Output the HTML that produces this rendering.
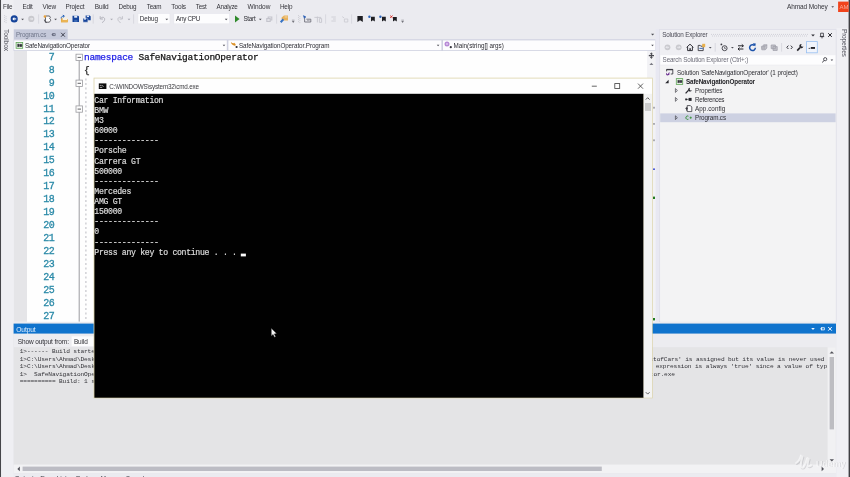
<!DOCTYPE html>
<html lang="en"><head><meta charset="utf-8"><title>SafeNavigationOperator - Microsoft Visual Studio</title>
<style>
*{box-sizing:border-box;margin:0;padding:0}
html,body{width:850px;height:477px;overflow:hidden;background:#ebebf0}
body{font-family:"Liberation Sans",sans-serif;font-size:7px;color:#222}
#root{position:relative;width:850px;height:477px;overflow:hidden;background:#ebebf0;will-change:transform}
.b{position:absolute}
.t{position:absolute;white-space:pre;line-height:10px;height:10px}
.v{position:absolute;white-space:nowrap;writing-mode:vertical-rl;font-size:6.6px;line-height:10px;width:10px;color:#55555f}
.ln{position:absolute;left:23.5px;width:30.6px;text-align:right;color:#2b8aa8;-webkit-text-stroke:0.3px #2b8aa8;font-family:"Liberation Mono",monospace;font-size:10px;letter-spacing:-0.6px;line-height:13px;height:13px;white-space:pre}
.code{position:absolute;left:84px;-webkit-text-stroke:0.25px;font-family:"Liberation Mono",monospace;font-size:9.5px;letter-spacing:-0.25px;line-height:13px;height:13px;white-space:pre;color:#151515}
.kw{color:#1c1ce6}
.con{position:absolute;left:94.3px;top:95.8px;color:#dcdcdc;-webkit-text-stroke:0.2px #dcdcdc;font-family:"Liberation Mono",monospace;font-size:8.2px;letter-spacing:-0.32px;line-height:10.13px;white-space:pre}
.out{position:absolute;color:#333338;font-family:"Liberation Mono",monospace;font-size:6.2px;letter-spacing:-0.145px;line-height:7.6px;white-space:pre}
svg{position:absolute;left:0;top:0;overflow:visible}

</style></head>
<body>
<div id="root">
<!-- ============ frame edges ============ -->
<svg width="850" height="477" viewBox="0 0 850 477">
<rect x="0.00" y="0.00" width="1.10" height="477.00" fill="#46464a"/>
<rect x="1.20" y="0.00" width="12.30" height="477.00" fill="#efeff3"/>
<rect x="836.60" y="28.00" width="12.00" height="449.00" fill="#f0f0f4"/>
<rect x="848.60" y="0.00" width="1.40" height="477.00" fill="#3e3e42"/>
<rect x="838.10" y="1.60" width="10.60" height="10.40" fill="#f0431c"/>
</svg>

<!-- ============ toolbar combos ============ -->
<svg width="850" height="477" viewBox="0 0 850 477">
<rect x="137.95" y="13.55" width="32.00" height="10.30" fill="#fdfdfe" stroke="#e4e4ec" stroke-width="0.50"/>
<rect x="173.85" y="13.55" width="55.60" height="10.30" fill="#fdfdfe" stroke="#e4e4ec" stroke-width="0.50"/>
</svg>

<!-- ============ document tab + nav bar ============ -->
<svg width="850" height="477" viewBox="0 0 850 477">
<rect x="13.80" y="29.30" width="53.90" height="10.10" fill="#c5c9da"/>
<rect x="13.60" y="39.30" width="642.00" height="11.70" fill="#cfd1e0"/>
<rect x="14.20" y="40.40" width="212.60" height="9.80" fill="#fdfdfe"/>
<rect x="228.40" y="40.40" width="213.00" height="9.80" fill="#fdfdfe"/>
<rect x="443.00" y="40.40" width="212.20" height="9.80" fill="#fdfdfe"/>
</svg>

<!-- ============ editor ============ -->
<svg width="850" height="477" viewBox="0 0 850 477">
<rect x="13.80" y="51.00" width="641.60" height="270.80" fill="#fefefe"/>
<rect x="13.80" y="51.00" width="13.20" height="270.80" fill="#e5e5e8"/>
<rect x="647.10" y="51.00" width="8.50" height="270.80" fill="#f2f2f5"/>
</svg>
<div class="ln" style="top:50.70px">7</div>
<div class="ln" style="top:63.65px">8</div>
<div class="ln" style="top:76.60px">9</div>
<div class="ln" style="top:89.55px">10</div>
<div class="ln" style="top:102.50px">11</div>
<div class="ln" style="top:115.45px">12</div>
<div class="ln" style="top:128.40px">13</div>
<div class="ln" style="top:141.35px">14</div>
<div class="ln" style="top:154.30px">15</div>
<div class="ln" style="top:167.25px">16</div>
<div class="ln" style="top:180.20px">17</div>
<div class="ln" style="top:193.15px">18</div>
<div class="ln" style="top:206.10px">19</div>
<div class="ln" style="top:219.05px">20</div>
<div class="ln" style="top:232.00px">21</div>
<div class="ln" style="top:244.95px">22</div>
<div class="ln" style="top:257.90px">23</div>
<div class="ln" style="top:270.85px">24</div>
<div class="ln" style="top:283.80px">25</div>
<div class="ln" style="top:296.75px">26</div>
<div class="ln" style="top:309.70px">27</div>
<div class="code" style="top:50.8px"><span class="kw">namespace</span> SafeNavigationOperator</div>
<div class="code" style="top:64.0px">{</div>

<!-- ============ solution explorer ============ -->
<svg width="850" height="477" viewBox="0 0 850 477">
<rect x="655.60" y="29.20" width="4.20" height="293.00" fill="#e8e8f2"/>
<rect x="659.50" y="29.70" width="176.60" height="292.00" fill="#efeff3" stroke="#dadae4" stroke-width="0.60"/>
<rect x="660.40" y="55.20" width="175.00" height="9.40" fill="#fdfdfe"/>
<rect x="660.20" y="65.80" width="175.40" height="256.00" fill="#f3f3f4"/>
<rect x="660.20" y="113.40" width="175.40" height="8.80" fill="#cdd1e2"/>
<rect x="806.60" y="41.60" width="10.70" height="11.20" fill="#f1f4fb" stroke="#98c0f2" stroke-width="0.80"/>
</svg>

<!-- ============ output panel ============ -->
<svg width="850" height="477" viewBox="0 0 850 477">
<rect x="13.60" y="323.60" width="822.40" height="149.60" fill="#e4e4e6"/>
<rect x="13.60" y="323.60" width="822.40" height="10.10" fill="#0f73cd"/>
<rect x="13.60" y="333.80" width="822.40" height="13.40" fill="#ececf0"/>
<rect x="71.60" y="336.40" width="62.00" height="9.80" fill="#fcfcfd"/>
<rect x="827.60" y="347.20" width="8.20" height="117.60" fill="#f1f1f3"/>
<rect x="829.60" y="357.00" width="4.40" height="72.40" fill="#bdbdc2"/>
<rect x="13.60" y="464.60" width="822.40" height="8.40" fill="#f2f2f4"/>
<rect x="22.60" y="466.60" width="579.20" height="4.40" fill="#bcbcc4"/>
</svg>
<div class="out" style="left:19.8px;top:348.1px">1&gt;------ Build started: Project: SafeNavigationOperator, Configuration: Debug Any CPU ------
1&gt;C:\Users\Ahmad\Desktop\
1&gt;C:\Users\Ahmad\Desktop\
1&gt;  SafeNavigationOperator -&gt; C:\Users\Ahmad\Desktop\
========== Build: 1 succeeded, 0 failed, 0 up-to-date, 0 skipped ==========</div>
<div class="out" style="right:25.6px;top:355.7px;text-align:right">warning CS0219: The variable 'listofCars' is assigned but its value is never used</div>
<div class="out" style="right:23px;top:363.3px;text-align:right">warning CS0472: The result of the expression is always 'true' since a value of typ</div>
<div class="out" style="right:175.2px;top:370.9px;text-align:right">\SafeNavigationOperator\bin\Debug\SafeNavigationOperator.exe</div>

<!-- ============ vertical side labels ============ -->
<div class="v" style="left:1.2px;top:29.4px;letter-spacing:-0.12px">Toolbox</div>
<div class="v" style="left:839.2px;top:28.8px;letter-spacing:-0.24px">Properties</div>

<!-- ============ icon layer (under console) ============ -->
<svg width="850" height="477" viewBox="0 0 850 477">
<g id="toolbar-icons">
  <!-- grips -->
  <g fill="#c6c6ce">
    <rect x="4.2" y="15.2" width="0.9" height="0.9"/><rect x="5.6" y="16.2" width="0.9" height="0.9"/>
    <rect x="4.2" y="17.2" width="0.9" height="0.9"/><rect x="5.6" y="18.2" width="0.9" height="0.9"/>
    <rect x="4.2" y="19.2" width="0.9" height="0.9"/><rect x="5.6" y="20.2" width="0.9" height="0.9"/>
    <rect x="4.2" y="21.2" width="0.9" height="0.9"/><rect x="5.6" y="22.2" width="0.9" height="0.9"/>
    <rect x="298" y="15.2" width="0.9" height="0.9"/><rect x="299.4" y="16.2" width="0.9" height="0.9"/>
    <rect x="298" y="17.2" width="0.9" height="0.9"/><rect x="299.4" y="18.2" width="0.9" height="0.9"/>
    <rect x="298" y="19.2" width="0.9" height="0.9"/><rect x="299.4" y="20.2" width="0.9" height="0.9"/>
    <rect x="298" y="21.2" width="0.9" height="0.9"/><rect x="299.4" y="22.2" width="0.9" height="0.9"/>
  </g>
  <!-- separators -->
  <g stroke="#d2d2da" stroke-width="0.8">
    <line x1="38.6" y1="14.4" x2="38.6" y2="23.6"/><line x1="93.2" y1="14.4" x2="93.2" y2="23.6"/>
    <line x1="133.6" y1="14.4" x2="133.6" y2="23.6"/><line x1="276.6" y1="14.4" x2="276.6" y2="23.6"/>
    <line x1="325.6" y1="14.4" x2="325.6" y2="23.6"/><line x1="351.6" y1="14.4" x2="351.6" y2="23.6"/>
  </g>
  <!-- dropdown arrows -->
  <g fill="#4e4e56">
    <path d="M21.2,18.7h2.8l-1.4,1.6z"/><path d="M54.2,18.7h2.8l-1.4,1.6z"/>
    <path d="M165.4,18.7h2.8l-1.4,1.6z"/><path d="M224.8,18.7h2.8l-1.4,1.6z"/>
    <path d="M258.9,18.7h2.8l-1.4,1.6z"/>
    <path d="M831.3,6.2h2.8l-1.4,1.6z"/>
    <path d="M291.9,21.2h2.6l-1.3,1.5z"/><rect x="291.9" y="19.8" width="2.6" height="0.6" opacity="0.7"/>
    <path d="M401.3,21.2h2.6l-1.3,1.5z"/><rect x="401.3" y="19.8" width="2.6" height="0.6" opacity="0.7"/>
  </g>
  <g fill="#a9a9b2"><path d="M110.2,18.7h2.8l-1.4,1.6z"/><path d="M127.6,18.7h2.8l-1.4,1.6z"/></g>
  <!-- back / forward -->
  <circle cx="14.2" cy="18.9" r="3.55" fill="#15439a"/>
  <path d="M16.2,18.9H13.4" stroke="#fff" stroke-width="1.1" fill="none"/><path d="M14.3,17.1L12.3,18.9l2,1.8z" fill="#fff"/>
  <circle cx="31.3" cy="18.9" r="3.1" fill="#c9c9ce"/>
  <path d="M29.8,18.9h2.8M31.6,17.8l1.1,1.1l-1.1,1.1" stroke="#f0f0f4" stroke-width="0.8" fill="none"/>
  <!-- new project -->
  <path d="M45.6,16h3.4c1.6,0.4 1.8,1.6 0.6,2.6c1.6,0.8 1.4,2.8 -0.6,3.6h-3.6z" fill="#fbfbfd" stroke="#4a4a52" stroke-width="0.85"/>
  <path d="M44.4,19.6c0,1.6 0.8,2.6 2.4,2.8" stroke="#3e3e46" stroke-width="0.9" fill="none"/>
  <circle cx="44.9" cy="16.4" r="1.25" fill="#eaa23a"/>
  <!-- open -->
  <path d="M61,18.2h2.6l0.8,0.8h3.4v3.3h-6.8z" fill="#e3a53e"/>
  <path d="M62.6,17.4h4.6v2.6h-4.6z" fill="#f7f0e0"/>
  <path d="M61.8,20h6.4l-0.7,2.3h-6.5z" fill="#eab454"/>
  <path d="M61.2,18.4c0,-1.6 0.8,-2.2 2.4,-2.2M62.9,15l1.5,1.2l-1.5,1.2" stroke="#1f5fb6" stroke-width="1" fill="none"/>
  <!-- save -->
  <path d="M72.5,15.7h5.6l0.9,0.9v5.3h-6.5z" fill="#15439a"/>
  <rect x="74.2" y="15.7" width="3" height="2" fill="#e4ebf8"/>
  <rect x="74.2" y="19.8" width="3.2" height="2.1" fill="#3f6cb6"/>
  <!-- save all -->
  <path d="M85.6,15.6h4.2l0.9,0.9v3.7h-5.1z" fill="#15439a"/>
  <path d="M83,18.2h4l0.9,0.9v3.1H83z" fill="#15439a" stroke="#ebebf0" stroke-width="0.5"/>
  <rect x="86.8" y="15.6" width="2.2" height="1.5" fill="#e4ebf8"/>
  <rect x="84" y="18.2" width="2" height="1.4" fill="#e4ebf8"/>
  <!-- undo / redo (disabled) -->
  <path d="M100.2,16.2v2.8h2.8M100.6,18.6c1.6,-2.4 4.6,-1.2 4,1.2c-0.3,1.3-1.3,2.2-2.6,2.8" stroke="#b4b4bd" stroke-width="1" fill="none"/>
  <path d="M122.4,16.2v2.8h-2.8M122,18.6c-1.6,-2.4 -4.6,-1.2 -4,1.2c0.3,1.3 1.3,2.2 2.6,2.8" stroke="#c3c3ca" stroke-width="1" fill="none"/>
  <!-- start -->
  <path d="M235,15.5L239.6,19L235,22.5z" fill="#2f8a2a"/>
  <!-- attach (disabled) -->
  <path d="M266.8,18.6h3.4v2.8h-3.4zM268.2,18.4v-1.4h3.6v3h-1.4" stroke="#c4c4cc" stroke-width="1.1" fill="none"/>
  <!-- find in files -->
  <path d="M281.6,17.4L284,15.5H288V20.4H284.4L281.6,19.2z" fill="#e8b25e"/>
  <path d="M284.6,16.4h2.8v1.1h-2.8z" fill="#f3d6a0"/>
  <path d="M280.7,22.2l2.7,-2.9" stroke="#3672c4" stroke-width="2" fill="none"/>
  <!-- comment/uncomment group -->
  <path d="M303.4,15.6l2.6,1.4l-1.2,0.5l-0.4,1.3z" fill="#1f56b0" stroke="#1f56b0" stroke-width="0.5"/>
  <path d="M304.6,18.4v3.6h6.2v-2.8h-4.4" stroke="#70707a" stroke-width="0.9" fill="none"/>
  <path d="M307,20.6h2.6" stroke="#9a9aa4" stroke-width="0.8"/>
  <path d="M314.4,17.4h6.8M317.4,16.6v5.8M319.4,18.6h2.2v3.8h-2.2z" stroke="#c6c6ce" stroke-width="0.9" fill="none"/>
  <path d="M331.4,17h4.4M333,19h2.8M331.4,21h4.4" stroke="#cdcdd4" stroke-width="0.9"/>
  <path d="M342.2,16.6l2,1.4M344.4,19h3.4v3h-3.4z" stroke="#cdcdd4" stroke-width="0.9" fill="none"/>
  <!-- bookmarks -->
  <path d="M357.4,16h5.4v6l-2.7,-1.8l-2.7,1.8z" fill="#1e1e22"/>
  <path d="M371,16.8h3.8v4.8l-1.9,-1.4l-1.9,1.4z" fill="#1e1e22"/>
  <circle cx="369.4" cy="16.8" r="1.2" fill="#2a62b8"/>
  <path d="M382,16.8h3.8v4.8l-1.9,-1.4l-1.9,1.4z" fill="#1e1e22"/>
  <circle cx="380.4" cy="16.8" r="1.2" fill="#2a62b8"/>
  <path d="M393,16.9h3.8v4.7l-1.9,-1.4l-1.9,1.4z" fill="#1e1e22"/>
  <path d="M390.2,15.6l2.4,2.2M392.6,15.6l-2.4,2.2" stroke="#d8241c" stroke-width="0.9"/>
</g>

<g id="tab-nav-icons">
  <!-- tab pin + close -->
  <path d="M51.6,34.6h1.2M52.8,33.2v2.8M52.8,33.6h2.4v2h-2.4z" stroke="#565a6e" stroke-width="0.7" fill="none"/>
  <path d="M61.1,32.8l3.8,3.9M64.9,32.8l-3.8,3.9" stroke="#3c3e4c" stroke-width="1" fill="none"/>
  <!-- nav combos -->
  <rect x="16.1" y="42.5" width="6.6" height="5.8" fill="#eaf4e6" stroke="#5ea456" stroke-width="0.8"/>
  <path d="M17.4,44.2h1.8v2.4h-1.8M20,44.4h1.8v2h-1.8z" stroke="#30303a" stroke-width="0.7" fill="#30303a"/>
  <g fill="#4e4e56">
    <path d="M651,33.7h3.2l-1.6,1.8z"/>
    <path d="M222.7,44.8h2.6l-1.3,1.5z"/><path d="M436.8,44.8h2.6l-1.3,1.5z"/><path d="M651.2,44.8h2.6l-1.3,1.5z"/>
  </g>
  <path d="M230.8,42l2,1.4l1.8,-0.6l1.4,2.2l-1.8,0.8l-2.2,-1.2z" fill="#e9a33c"/>
  <path d="M231.4,43l3.8,2.2" stroke="#c98220" stroke-width="0.8"/>
  <circle cx="236.6" cy="47" r="1.1" fill="#26262c"/>
  <circle cx="447" cy="43.9" r="2.5" fill="#b78ad6"/>
  <circle cx="447" cy="43.9" r="1" fill="#dcc6ee"/>
  <circle cx="450.8" cy="47.2" r="1.1" fill="#33333a"/>
</g>

<g id="editor-icons">
  <!-- outlining -->
  <path d="M79.2,60.6V321.6" stroke="#9c9ca0" stroke-width="1"/>
  <path d="M85.9,78.6V321.6" stroke="#c6c6cb" stroke-width="1.2" stroke-dasharray="2 2.5"/>
  <g fill="#fefefe" stroke="#9a9a9e" stroke-width="0.8">
    <rect x="76" y="54.2" width="6.4" height="6.3"/>
    <rect x="76" y="80.1" width="6.4" height="6.3"/>
    <rect x="76" y="105.9" width="6.4" height="6.3"/>
  </g>
  <path d="M77.6,57.4h3.4M77.6,83.3h3.4M77.6,109.1h3.4" stroke="#3a3a3e" stroke-width="0.8"/>
  <!-- scrollbar column -->
  <path d="M651.4,53v5.2M648.8,55.6h5.2" stroke="#4a4a52" stroke-width="1.1"/>
  <path d="M650,54.2l1.4,-1.4l1.4,1.4M650,57l1.4,1.4l1.4,-1.4" stroke="#4a4a52" stroke-width="0.7" fill="none"/>
  <path d="M649.4,65l2,-2.2l2,2.2z" fill="#7a7a84"/>
  <rect x="653.2" y="106.8" width="1.6" height="1.8" fill="#9a9aa2"/>
  <rect x="653.2" y="123" width="1.6" height="1.8" fill="#9a9aa2"/>
  <rect x="653.2" y="139.4" width="1.6" height="1.8" fill="#9a9aa2"/>
  <rect x="653.2" y="168.4" width="1.6" height="1.6" fill="#2a3ad0"/>
  <rect x="653" y="196.6" width="2" height="2.4" fill="#1f7a1f"/>
  <rect x="653" y="318" width="2" height="2.4" fill="#1f7a1f"/>
</g>

<g id="solution-explorer-icons">
  <!-- caption grip -->
  <path d="M711,34.4H808M712,36H808" stroke="#c3c3cc" stroke-width="0.8" stroke-dasharray="0.9 1.1"/>
  <path d="M811.2,34.4h3.6l-1.8,2z" fill="#2e2e36"/>
  <path d="M820.6,33.2h2.8v3.2h-2.8zM819.8,36.6h4.4M822,36.6v1.8" stroke="#2e2e36" stroke-width="0.8" fill="none"/>
  <path d="M828.2,33.2l3.6,3.7M831.8,33.2l-3.6,3.7" stroke="#26262c" stroke-width="1" fill="none"/>
  <!-- toolbar -->
  <circle cx="667.5" cy="47.3" r="2.9" fill="#cacacf"/>
  <path d="M669,47.3h-2.8M667.2,46.2l-1.1,1.1l1.1,1.1" stroke="#f0f0f4" stroke-width="0.8" fill="none"/>
  <circle cx="678.7" cy="47.3" r="2.9" fill="#cacacf"/>
  <path d="M677.2,47.3h2.8M679,46.2l1.1,1.1l-1.1,1.1" stroke="#f0f0f4" stroke-width="0.8" fill="none"/>
  <path d="M686.6,47.4l3.4,-3.2l3.4,3.2M687.6,47v3.6h4.8V47" stroke="#33333a" stroke-width="1" fill="none"/>
  <rect x="689.4" y="48.2" width="1.4" height="2.4" fill="#33333a"/>
  <path d="M698.2,45.4h2l0.6,0.8h2.4v4.4h-5z" fill="none" stroke="#3a3a42" stroke-width="0.9"/>
  <rect x="702.2" y="43.8" width="3" height="3.4" fill="#e8b04c"/>
  <path d="M699.4,48.4h3.4" stroke="#2a62b8" stroke-width="0.9"/>
  <path d="M708.8,46.9h2.8l-1.4,1.6z" fill="#4e4e56"/>
  <path d="M715.2,43v8.6" stroke="#d2d2da" stroke-width="0.8"/>
  <circle cx="724.6" cy="48.2" r="2.5" fill="none" stroke="#3a3a42" stroke-width="0.9"/>
  <path d="M724.6,46.8v1.6h1.2" stroke="#3a3a42" stroke-width="0.7" fill="none"/>
  <circle cx="721.4" cy="44.4" r="0.9" fill="#3a3a42"/>
  <path d="M731,46.9h2.8l-1.4,1.6z" fill="#4e4e56"/>
  <path d="M738,45.8h5.4M741.8,44.4l1.6,1.4l-1.6,1.4M743.4,49h-5.4M739.6,47.6l-1.6,1.4l1.6,1.4" stroke="#26262c" stroke-width="1.0" fill="none"/>
  <path d="M754.6,45.6a2.9,2.9 0 1 0 0.8,2.2" stroke="#1b52aa" stroke-width="1.5" fill="none"/>
  <path d="M752.8,43.2l3,0.4l-0.6,3z" fill="#1b52aa"/>
  <path d="M761.4,46.4h3.8v3.4h-3.4zM762.4,46.4l1.2,-1.6h3.4l-1,1.6M766.8,44.8v3.2l-1.4,1.8" stroke="#a6a6b0" stroke-width="0.8" fill="#b4b4bc"/>
  <path d="M771.2,45h4.2v3.6h-4.2zM773,46.6h4.2v3.8H773z" stroke="#a0a0aa" stroke-width="0.8" fill="#c3c3ca"/>
  <path d="M781.6,43v8.6" stroke="#d2d2da" stroke-width="0.8"/>
  <path d="M788.4,45.6l-1.6,1.7l1.6,1.7M790.8,45.6l1.6,1.7l-1.6,1.7" stroke="#2e2e36" stroke-width="0.95" fill="none"/>
  <path d="M797.2,50.6l2.8,-3" stroke="#26262c" stroke-width="1.6"/>
  <path d="M801.6,44a2.1,2.1 0 1 0 1.8,2.6l-1.5,0.2l-0.9,-1.1z" fill="#26262c"/>
  <path d="M808.6,48.4h1.6" stroke="#2e2e36" stroke-width="0.8"/>
  <rect x="810.8" y="47" width="4.2" height="1.9" fill="#26262c"/>
  <!-- search -->
  <circle cx="825.2" cy="59.2" r="1.6" fill="none" stroke="#3a3a42" stroke-width="0.85"/>
  <path d="M824,60.6l-1.8,1.8" stroke="#3a3a42" stroke-width="1"/>
  <path d="M830.6,59.6h2.6l-1.3,1.5z" fill="#4e4e56"/>
  <!-- tree -->
  <path d="M666.6,69.4h6.2v4.6h-2M666.6,69.4v2" stroke="#33333a" stroke-width="0.85" fill="none"/>
  <path d="M666.6,69.7h6.2" stroke="#33333a" stroke-width="1.1"/>
  <path d="M666.2,72.4l1.4,2l1.8,-2.6v3l-1.8,0.8l-1.4,-0.6z" fill="#6a2c91"/>
  <path d="M668.6,79.8v3.4h-3.4z" fill="#26262c"/>
  <rect x="676.3" y="78.6" width="6.4" height="5.8" fill="#e8f3e4" stroke="#5ea456" stroke-width="0.8"/>
  <path d="M677.6,80.4h1.8v2.2h-1.8M680.2,80.6h1.6v1.8h-1.6z" stroke="#30303a" stroke-width="0.7" fill="#30303a"/>
  <g fill="none" stroke="#4a4a52" stroke-width="0.75">
    <path d="M675.4,88.6l2,1.9l-2,1.9z"/><path d="M675.4,97.5l2,1.9l-2,1.9z"/><path d="M675.4,115.8l2,1.9l-2,1.9z"/>
  </g>
  <path d="M685.6,93.4l2.8,-3" stroke="#26262c" stroke-width="1.3"/>
  <path d="M690,87.8a1.9,1.9 0 1 0 1.8,2.4l-1.4,0.2l-0.8,-1z" fill="#26262c"/>
  <rect x="685.2" y="98.5" width="1.8" height="1.8" fill="#26262c"/>
  <path d="M687,99.4h1.6" stroke="#26262c" stroke-width="0.7"/>
  <rect x="688.6" y="97.9" width="3" height="3" fill="#26262c"/>
  <path d="M687.2,105.6h3.2l1.4,1.4v4.6h-4.6z" fill="#fbfbfd" stroke="#33333a" stroke-width="0.8"/>
  <path d="M685.4,108.4h2.4M686.6,107.2v3.4" stroke="#33333a" stroke-width="0.9"/>
  <path d="M688.4,116.2a1.7,1.7 0 1 0 0,3" stroke="#2f8f2f" stroke-width="1" fill="none"/>
  <path d="M689.6,117.7h2.2M690.7,116.6v2.2" stroke="#2f8f2f" stroke-width="0.8"/>
</g>

<g id="output-icons">
  <path d="M811.2,328h3.6l-1.8,2z" fill="#f2f7ff"/>
  <path d="M820.2,328.8h1.4M821.6,327.2v3.2M821.6,327.7h2.8v2.2h-2.8z" stroke="#f2f7ff" stroke-width="0.8" fill="none"/>
  <path d="M828.2,327l3.6,3.7M831.8,327l-3.6,3.7" stroke="#f8fbff" stroke-width="1" fill="none"/>
  <path d="M829.6,353.6l2.2,-2.4l2.2,2.4z" fill="#505058"/>
  <path d="M829.6,459.2l2.2,2.4l2.2,-2.4z" fill="#505058"/>
  <path d="M19.8,466.6l-2.4,2.3l2.4,2.3z" fill="#505058"/>
  <path d="M821.6,466.6l2.4,2.3l-2.4,2.3z" fill="#505058"/>
</g>

</svg>

<!-- ============ console window ============ -->
<svg width="850" height="477" viewBox="0 0 850 477">
<rect x="93.60" y="77.70" width="559.10" height="320.60" fill="#ddd5aa"/>
<rect x="94.40" y="78.50" width="557.60" height="15.50" fill="#fefefe"/>
<rect x="94.40" y="93.80" width="549.20" height="303.90" fill="#010101"/>
<rect x="643.60" y="93.80" width="8.40" height="303.90" fill="#f3f3f3"/>
<rect x="645.00" y="103.00" width="6.00" height="8.00" fill="#cdcdcd"/>
</svg>
<div class="con">Car Information
BMW
M3
60000
--------------
Porsche
Carrera GT
500000
--------------
Mercedes
AMG GT
150000
--------------
0
--------------
Press any key to continue . . . </div>
<svg width="850" height="477" viewBox="0 0 850 477">
<rect x="240.80" y="253.60" width="5.10" height="2.80" fill="#fafafa"/>
</svg>

<span class="t" style="left:3.10px;top:1.82px;font-size:6.30px;color:#34343a;letter-spacing:-0.240px;">File</span>
<span class="t" style="left:22.60px;top:1.82px;font-size:6.30px;color:#34343a;letter-spacing:-0.215px;">Edit</span>
<span class="t" style="left:42.60px;top:1.76px;font-size:6.45px;color:#34343a;letter-spacing:-0.120px;">View</span>
<span class="t" style="left:65.50px;top:1.79px;font-size:6.37px;color:#34343a;letter-spacing:-0.120px;">Project</span>
<span class="t" style="left:94.70px;top:1.75px;font-size:6.50px;color:#34343a;letter-spacing:-0.114px;">Build</span>
<span class="t" style="left:118.50px;top:1.82px;font-size:6.30px;color:#34343a;letter-spacing:-0.153px;">Debug</span>
<span class="t" style="left:146.80px;top:1.82px;font-size:6.30px;color:#34343a;letter-spacing:-0.254px;">Team</span>
<span class="t" style="left:171.30px;top:1.75px;font-size:6.50px;color:#34343a;letter-spacing:-0.118px;">Tools</span>
<span class="t" style="left:195.70px;top:1.82px;font-size:6.30px;color:#34343a;letter-spacing:-0.164px;">Test</span>
<span class="t" style="left:216.60px;top:1.82px;font-size:6.30px;color:#34343a;letter-spacing:-0.188px;">Analyze</span>
<span class="t" style="left:247.50px;top:1.75px;font-size:6.50px;color:#34343a;letter-spacing:-0.054px;">Window</span>
<span class="t" style="left:279.90px;top:1.80px;font-size:6.36px;color:#34343a;letter-spacing:-0.120px;">Help</span>
<span class="t" style="left:787.00px;top:1.75px;font-size:6.50px;color:#34343a;letter-spacing:-0.120px;">Ahmad Mohey</span>
<span class="t" style="left:139.80px;top:13.81px;font-size:6.32px;color:#2e2e34;letter-spacing:-0.120px;">Debug</span>
<span class="t" style="left:176.00px;top:13.82px;font-size:6.30px;color:#2e2e34;letter-spacing:-0.256px;">Any CPU</span>
<span class="t" style="left:243.40px;top:13.82px;font-size:6.30px;color:#2e2e34;letter-spacing:-0.241px;">Start</span>
<span class="t" style="left:16.00px;top:29.82px;font-size:6.30px;color:#70768a;letter-spacing:-0.199px;">Program.cs</span>
<span class="t" style="left:24.90px;top:40.82px;font-size:6.30px;color:#2e2e34;letter-spacing:-0.116px;">SafeNavigationOperator</span>
<span class="t" style="left:239.00px;top:40.82px;font-size:6.30px;color:#2e2e34;letter-spacing:-0.094px;">SafeNavigationOperator.Program</span>
<span class="t" style="left:453.50px;top:40.82px;font-size:6.30px;color:#2e2e34;letter-spacing:-0.024px;">Main(string[] args)</span>
<span class="t" style="left:662.20px;top:29.82px;font-size:6.30px;color:#4a4a55;letter-spacing:-0.156px;">Solution Explorer</span>
<span class="t" style="left:662.60px;top:54.82px;font-size:6.30px;color:#6d6d78;letter-spacing:-0.160px;">Search Solution Explorer (Ctrl+;)</span>
<span class="t" style="left:676.90px;top:67.82px;font-size:6.30px;color:#2e2e34;letter-spacing:-0.081px;">Solution &#x27;SafeNavigationOperator&#x27; (1 project)</span>
<span class="t" style="left:686.00px;top:76.82px;font-size:6.30px;color:#1e1e22;font-weight:bold;letter-spacing:-0.145px;">SafeNavigationOperator</span>
<span class="t" style="left:695.10px;top:85.82px;font-size:6.30px;color:#2e2e34;letter-spacing:-0.150px;">Properties</span>
<span class="t" style="left:695.10px;top:94.82px;font-size:6.30px;color:#2e2e34;letter-spacing:-0.310px;">References</span>
<span class="t" style="left:695.10px;top:103.82px;font-size:6.30px;color:#2e2e34;letter-spacing:0.033px;">App.config</span>
<span class="t" style="left:695.10px;top:112.82px;font-size:6.30px;color:#2e2e34;letter-spacing:-0.140px;">Program.cs</span>
<span class="t" style="left:16.30px;top:324.69px;font-size:6.67px;color:#e4f0ff;letter-spacing:-0.120px;">Output</span>
<span class="t" style="left:17.70px;top:336.75px;font-size:6.50px;color:#2e2e34;letter-spacing:-0.091px;">Show output from:</span>
<span class="t" style="left:73.90px;top:336.76px;font-size:6.47px;color:#2e2e34;letter-spacing:-0.120px;">Build</span>
<span class="t" style="left:109.30px;top:81.82px;font-size:6.30px;color:#3c3c40;letter-spacing:-0.171px;">C:\WINDOWS\system32\cmd.exe</span>
<span class="t" style="left:14.60px;top:473.71px;font-size:6.60px;color:#3a3a42;letter-spacing:-0.120px;">Output</span>
<span class="t" style="left:40.20px;top:473.64px;font-size:6.80px;color:#3a3a42;letter-spacing:-0.108px;">Error List</span>
<span class="t" style="left:76.00px;top:473.82px;font-size:6.30px;color:#3a3a42;letter-spacing:-0.203px;">Package Manager Console</span>
<span class="t" style="left:839.60px;top:1.92px;font-size:6.00px;color:#f7ab98;letter-spacing:-0.000px;">AM</span>

<!-- ============ icon layer (top) ============ -->
<svg width="850" height="477" viewBox="0 0 850 477">
<g id="console-icons">
  <rect x="98.8" y="83.4" width="7.6" height="5.6" fill="#0c0c0c"/>
  <path d="M99.8,85.4h1.8M102.4,85.2l1,1.6M99.8,87.4h2.4" stroke="#e8e8e8" stroke-width="0.7" fill="none"/>
  <path d="M591.8,86.2h5" stroke="#3c3c3c" stroke-width="0.8"/>
  <rect x="614.8" y="83.6" width="4.9" height="4.9" fill="none" stroke="#3c3c3c" stroke-width="0.8"/>
  <path d="M638,83.6l5,5.1M643,83.6l-5,5.1" stroke="#3c3c3c" stroke-width="0.8" fill="none"/>
  <path d="M645.8,99.6l1.9,-1.9l1.9,1.9" stroke="#555555" stroke-width="0.95" fill="none"/>
  <path d="M645.8,392.2l1.9,1.9l1.9,-1.9" stroke="#555555" stroke-width="0.95" fill="none"/>
</g>
<g id="mouse-pointer">
  <path d="M271.3,328.3V335.9L273.1,334.4L274.5,337.3L275.7,336.7L274.3,333.9L276.6,333.6Z" fill="#f4f4f4" stroke="#1a1a1a" stroke-width="0.4"/>
</g>
<g id="watermark">
  <g opacity="0.22" transform="translate(0.7,0.8)">
    <path d="M796.2,463c2.4,-1.4 4,-4 4.8,-7.4c0.3,0.6 0.9,0.9 1.5,1c-1,3 -2,6.8 -1.6,9.6c0.3,1.8 1.9,2 3,0.4c1.5,-2.2 2.5,-5.6 3.3,-8.4c0.4,0.5 1,0.8 1.6,0.8c-0.8,2.4 -1.4,4.6 -1.1,6.2c0.3,1.5 1.7,1.5 3.4,0.2" stroke="#70707a" stroke-width="2.2" fill="none" stroke-linecap="round" stroke-linejoin="round"/>
    <text x="816" y="466.5" font-family="'Liberation Sans',sans-serif" font-weight="bold" font-size="9" letter-spacing="-0.1" fill="#70707a">Udemy</text>
  </g>
  <g opacity="0.72">
    <path d="M796.2,463c2.4,-1.4 4,-4 4.8,-7.4c0.3,0.6 0.9,0.9 1.5,1c-1,3 -2,6.8 -1.6,9.6c0.3,1.8 1.9,2 3,0.4c1.5,-2.2 2.5,-5.6 3.3,-8.4c0.4,0.5 1,0.8 1.6,0.8c-0.8,2.4 -1.4,4.6 -1.1,6.2c0.3,1.5 1.7,1.5 3.4,0.2" stroke="#fcfcfd" stroke-width="2" fill="none" stroke-linecap="round" stroke-linejoin="round"/>
    <text x="816" y="466.5" font-family="'Liberation Sans',sans-serif" font-weight="bold" font-size="9" letter-spacing="-0.1" fill="#fcfcfd">Udemy</text>
  </g>
</g>

</svg>

</div>
</body></html>
